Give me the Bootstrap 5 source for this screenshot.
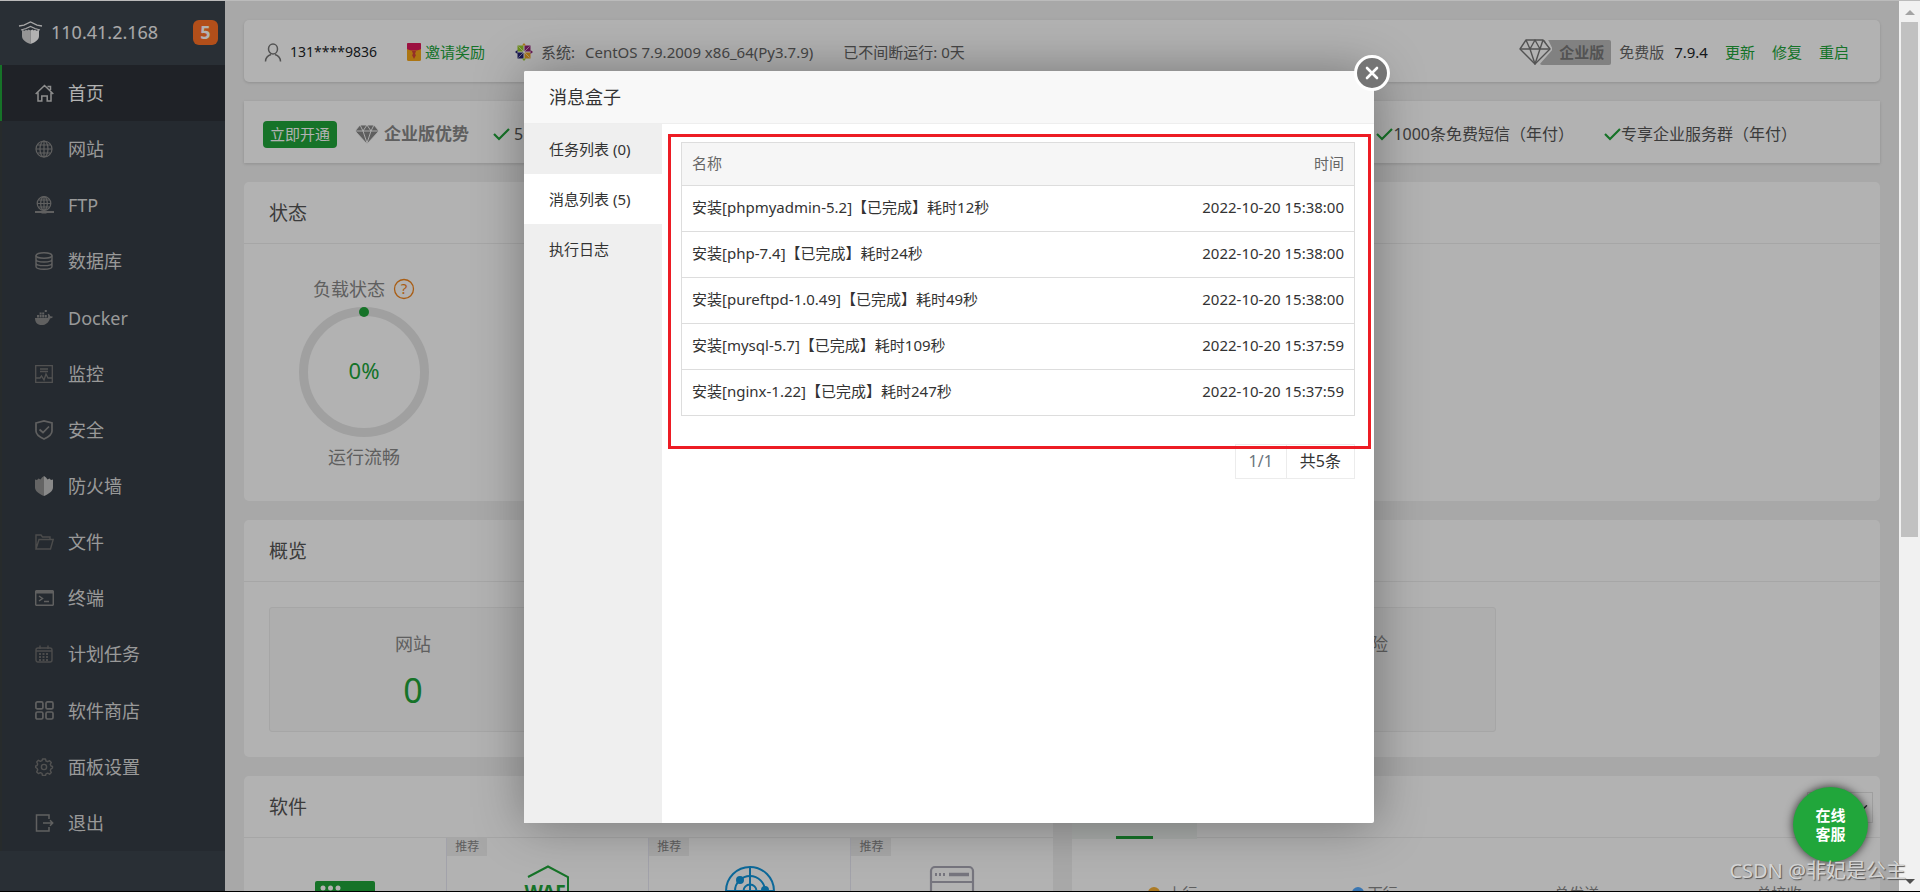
<!DOCTYPE html>
<html lang="zh-CN">
<head>
<meta charset="utf-8">
<meta name="viewport" content="width=device-width, initial-scale=1">
<title>服务器面板</title>
<link href="https://cdn.jsdelivr.net/npm/bootstrap@5.3.0/dist/css/bootstrap.min.css" rel="stylesheet">
<style>
  :root { --green: #20a53a; --gap: 19px; }
  body { font-family: "Noto Sans", "Noto Sans CJK SC", sans-serif; font-size: 15px; line-height: 20px; color: #555; background: #f1f1f1; }
  a { text-decoration: none; color: inherit; }
  svg { display: block; flex: none; }
  .app { border-top: 1px solid #bbb; border-bottom: 1px solid #000; }

  .side { width: 225px; background: #3c444d; padding-bottom: 40px; font-size: 18px; }
  .side-head { height: 64px; padding: 0 7px 2px 18px; color: #f2f2f2; }
  .count { width: 25px; height: 25px; line-height: 25px; border-radius: 6px; background: #ff7226; color: #fff; }
  .menu { background: #363d45; }
  .menu a { border-left: 2px solid #383e40; padding-left: 33px; gap: 14px; color: #dcdcdc; }
  .menu svg { color: #8a8a8a; }
  .menu .on a { background: #2d3238; border-color: var(--green); color: #fff; }
  .menu .on svg { color: #ccc; }

  .page { padding: var(--gap); gap: var(--gap); }
  .panel { background: #fff; border-radius: 5px; }
  .pair { gap: var(--gap); }
  .bar { min-height: 62px; box-shadow: 0 1px 3px rgba(0,0,0,.15); }
  .info { padding: 2px 31px 0 20px; color: #666; }
  .phone { font-size: 14px; }
  .sect { margin-left: 30px; }
  .near { margin-left: 10px; }
  .act { margin-left: 17px; }
  .green { color: var(--green); }
  .ent { height: 25px; margin-left: -12px; padding: 0 7px 0 19px; background: #b9b9b9; color: #777; border-radius: 2px; }
  .promo { border-radius: 0; padding: 4px 83px 0 19px; font-size: 16px; }
  .open-btn { background: var(--green); color: #fff; border: 0; border-radius: 4px; padding: 3px 7px; font-size: 15px; line-height: 21px; }
  .adv { font-size: 17px; color: #888; }
  .panel-head { height: 62px; padding: 0 25px; border-bottom: 1px solid #eee; font-size: 19px; color: #555; }
  .status-body { padding: 34px 0 34px 39px; font-size: 18px; color: #888; }
  .load { width: 162px; }
  .load-title { height: 22px; }
  .ring { width: 130px; height: 130px; margin: 7px 0 10px; }
  .ring span { font-size: 22px; line-height: 26px; padding-bottom: 4px; }
  .over { padding: 25px; gap: 25px; }
  .tile { width: 288px; padding: 26px 0 19px; border: 1px solid #eee; border-radius: 3px; background: #f9f9f9; font-size: 18px; color: #888; }
  .tile b { font-size: 34px; line-height: 44px; margin-top: 14px; font-weight: 400; }
  .soft { height: 140px; }
  .soft > div { border-left: 1px solid #e9e9f4; padding-top: 27px; }
  .soft > div:first-child { border-left: 0; }
  .soft .tag { background: #f0f0f0; color: #888; font-size: 12px; line-height: 18px; padding: 0 8px; }
  .tab { width: 125px; background: #f2f7f4; border: 0; height: 63px; }
  .tab::after { content: ""; display: block; width: 37px; height: 3px; margin: 60px auto 0; background: var(--green); }
  .pick { width: 66px; height: 31px; margin-right: 7px; border: 1px solid #e4e4e4; border-radius: 0; background-position: right 2px center; }
  .legend { padding-top: 45px; color: #888; }
  .dot { width: 12px; height: 12px; border-radius: 50%; }

  .shade { background: rgba(0,0,0,.3); padding: 2px 1px 0 0; }
  .box { width: 850px; height: 752px; background: #fff; border-radius: 2px; box-shadow: 1px 1px 50px rgba(0,0,0,.35); color: #333; }
  .box-head { height: 53px; padding: 0 25px; background: #f8f8f8; border-bottom: 1px solid #eee; font-size: 18px; border-radius: 2px 2px 0 0; }
  .box-x { width: 36px; height: 36px; right: -16px; top: -16px; border: 3px solid #fff; border-radius: 50%; background: #757575; color: #fff; }
  .box-nav { width: 138px; background: #efefef; }
  .box-nav button { height: 50px; border: 0; background: none; padding: 0 0 0 25px; text-align: left; color: #333; }
  .box-nav .on { background: #fff; }
  .box-main { padding: 18px 19px; }
  .msgs { border: 1px solid #ddd; }
  .msgs th { height: 43px; background: #f6f6f6; color: #666; font-weight: 400; }
  .msgs td { height: 46px; border-top: 1px solid #ddd; color: #333; }
  .msgs th, .msgs td { padding: 0 10px 2px; vertical-align: middle; }
  .msgs td { padding-bottom: 4px; }
  .pager { margin-top: 28px; border: 1px solid #ececec; font-size: 16px; }
  .pager span { padding: 0 13px; line-height: 33px; }
  .pager span + span { border-left: 1px solid #ececec; }
  .frame { inset: 10px 3px 374px 6px; border: 3px solid #ed1c24; pointer-events: none; }

  .help { width: 75px; height: 75px; right: 31px; bottom: 29px; border: 0; border-radius: 50%; background: #21a63b; color: #fff; box-shadow: 0 0 10px rgba(0,0,0,.75); line-height: 19px; }
  .credit { right: -7px; bottom: 7px; font-size: 20px; line-height: 26px; color: #d4d4d4; text-shadow: 1px 1px 1px #555; }
  .scroll { width: 21px; background: #f1f1f1; padding: 9px 2px 7px; }
  .thumb { background: #c1c1c1; height: 515px; }
  .tri { border: 5px solid transparent; }
  .tri-up { border-bottom-color: #a3a3a3; border-top: 0; margin-bottom: 7px; }
  .tri-down { border-top-color: #505050; border-bottom: 0; }
</style>
</head>
<body>
<div class="app d-flex vh-100 overflow-hidden">
  <div class="position-relative d-flex flex-grow-1">
    <nav class="side d-flex flex-column flex-shrink-0">
      <div class="side-head d-flex align-items-center">
        <svg width="25" height="25" viewBox="0 0 25 25" fill="none" stroke="#eee" stroke-width="1.3"><path d="M1 6l5-.8L12.500 2 19 5.200l5 .8M3 10l5-1.500 4.500-2 4.500 2L22 10"/><path fill="#d6d6d6" stroke="none" d="M4 10l3 .8.8-1.300 1.400 1 1.400-1 1.900 1V24C7 22 4 19.500 4 16z"/><path fill="#fff" stroke="none" d="M21 10l-3 .8-.8-1.300-1.400 1-1.400-1-1.900 1V24C18 22 21 19.500 21 16z"/></svg>
        <span class="ms-2">110.41.2.168</span>
        <span class="count ms-auto text-center fw-bold">5</span>
      </div>
      <ul class="menu list-unstyled mb-0 d-flex flex-column flex-fill">
        <li class="on d-flex flex-fill"><a href="#" class="d-flex flex-fill align-items-center"><svg width="19" height="18" viewBox="0 0 19 18" fill="none" stroke="currentColor" stroke-width="1.500"><path d="M.7 10L9.500 1.500 18.300 10M12.500 2.500h3v3.500M3 8.500V17h3.800v-5h5.400v5h3.800V8.500"/></svg>首页</a></li>
        <li class="d-flex flex-fill"><a href="#" class="d-flex flex-fill align-items-center"><svg width="19" height="18" viewBox="0 0 19 18" fill="none" stroke="currentColor" stroke-width="1.200"><circle cx="9" cy="9" r="8"/><ellipse cx="9" cy="9" rx="4" ry="8"/><path d="M9 1v16M1 9h16M2.500 5h13M2.500 13h13"/></svg>网站</a></li>
        <li class="d-flex flex-fill"><a href="#" class="d-flex flex-fill align-items-center"><svg width="19" height="18" viewBox="0 0 19 18" fill="none" stroke="currentColor" stroke-width="1.200"><circle cx="9" cy="7.500" r="6.800"/><ellipse cx="9" cy="7.500" rx="3.300" ry="6.800"/><path d="M9 1v13M2 7.500h14M3.500 4h11M3.500 11h11"/><path stroke-width="2" d="M0 16h19M6.500 16.500h5"/></svg>FTP</a></li>
        <li class="d-flex flex-fill"><a href="#" class="d-flex flex-fill align-items-center"><svg width="19" height="18" viewBox="0 0 19 18" fill="none" stroke="currentColor" stroke-width="1.400"><ellipse cx="9" cy="3.500" rx="8" ry="2.800"/><path d="M1 3.500v11C1 18.200 17 18.200 17 14.500v-11M1 7.200c0 3.700 16 3.700 16 0M1 10.900c0 3.700 16 3.700 16 0"/></svg>数据库</a></li>
        <li class="d-flex flex-fill"><a href="#" class="d-flex flex-fill align-items-center"><svg width="19" height="18" viewBox="0 0 19 18" fill="currentColor"><path d="M0 9h12.500c1-.8.8-2.500.2-3.300l.8-.9c1 .6 1.500 1.600 1.600 2.500 1-.2 2 0 2.900.5-.6 1.200-1.700 1.600-3 1.600C13.500 13.500 11 16 6.500 16 2.500 16 0 13.500 0 9zM2 6h2v2.400H2zM4.600 6h2v2.400h-2zM7.200 6h2v2.400h-2zM9.800 6h2v2.400h-2zM7.200 3.400h2v2h-2zM4.600 3.400h2v2h-2zM9.800 1h2v2h-2z"/></svg>Docker</a></li>
        <li class="d-flex flex-fill"><a href="#" class="d-flex flex-fill align-items-center"><svg width="19" height="18" viewBox="0 0 19 18" fill="none" stroke="#757575" stroke-width="1.300"><path d="M.7.7h16.600v16.600H.7zM5 4h8M5 6.500h8M1 13h4l1.500-2 2.500 4 2-6 2 4h4"/></svg>监控</a></li>
        <li class="d-flex flex-fill"><a href="#" class="d-flex flex-fill align-items-center"><svg width="19" height="20" viewBox="0 0 19 20" fill="none" stroke="currentColor" stroke-width="1.700"><path d="M1 3l8-2 8 2v8c0 3.500-3.500 6-8 8-4.500-2-8-4.500-8-8zM4.500 9.500l3.500 3 6-6"/></svg>安全</a></li>
        <li class="d-flex flex-fill"><a href="#" class="d-flex flex-fill align-items-center"><svg width="19" height="20" viewBox="0 0 19 20"><path fill="#909090" d="M0 3.500l2 .5 1.500-1.500 2 1L7 1.500 9 0v20c-5-2-9-5-9-8.500z"/><path fill="#c4c4c4" d="M18 3.500l-2 .5-1.500-1.500-2 1L11 1.500 9 0v20c5-2 9-5 9-8.500z"/></svg>防火墙</a></li>
        <li class="d-flex flex-fill"><a href="#" class="d-flex flex-fill align-items-center"><svg width="19" height="18" viewBox="0 0 19 18" fill="none" stroke="#6d6d6d" stroke-width="1.400"><path d="M1 16V2h5l1.500 2H15v2.500M1 16L4 6.500h14.200L15.500 16z"/></svg>文件</a></li>
        <li class="d-flex flex-fill"><a href="#" class="d-flex flex-fill align-items-center"><svg width="19" height="16" viewBox="0 0 19 16" fill="none" stroke="currentColor" stroke-width="1.500"><rect x=".7" y=".7" width="17.600" height="14.600" rx="1"/><path stroke-width="3" d="M1 2h17"/><path d="M4 6l3.500 2.500L4 11M9 11.500h5"/></svg>终端</a></li>
        <li class="d-flex flex-fill"><a href="#" class="d-flex flex-fill align-items-center"><svg width="19" height="18" viewBox="0 0 19 18" fill="none" stroke="#6d6d6d" stroke-width="1.400"><rect x="1" y="3" width="16" height="14" rx="2"/><path d="M1 6h16M5 .5V4M13 .5V4"/><path stroke-width="2" stroke-dasharray="2 1.500" d="M4 9h10.500M4 12h10.500M4 15h10.500"/></svg>计划任务</a></li>
        <li class="d-flex flex-fill"><a href="#" class="d-flex flex-fill align-items-center"><svg width="19" height="19" viewBox="0 0 19 19" fill="none" stroke="currentColor" stroke-width="1.700"><rect x=".9" y=".9" width="7" height="7" rx="1.500"/><rect x="11" y=".9" width="7" height="7" rx="1.500"/><rect x=".9" y="11" width="7" height="7" rx="1.500"/><rect x="11" y="11" width="7" height="7" rx="1.500"/></svg>软件商店</a></li>
        <li class="d-flex flex-fill"><a href="#" class="d-flex flex-fill align-items-center"><svg width="19" height="18" viewBox="0 0 19 18" fill="none" stroke="#757575" stroke-width="1.400" stroke-linejoin="round"><circle cx="9" cy="9" r="2.600"/><path d="M7.500 1h3l.5 2 1.600.7 2-1 1.700 1.700-1 2 .7 1.600 1.500.5v1.500l-1.500.9-.7 1.600 1 2-1.700 1.700-2-1-1.600.7-.5 1.600h-3L7 15.300l-1.600-.7-2 1-1.700-1.700 1-2L2 10.300l-1.300-.8V8l1.300-.4L2.700 6l-1-2 1.700-1.700 2 1L7 2.700z"/></svg>面板设置</a></li>
        <li class="d-flex flex-fill"><a href="#" class="d-flex flex-fill align-items-center"><svg width="19" height="18" viewBox="0 0 19 18" fill="none" stroke="currentColor" stroke-width="1.500"><path d="M14 5V1H1.500v16H14v-4M8 9h10M15 6.300L17.700 9 15 11.700"/></svg>退出</a></li>
      </ul>
    </nav>

    <main class="page d-flex flex-column flex-grow-1">
      <section class="panel bar info d-flex align-items-center">
        <svg width="18" height="19" viewBox="0 0 18 19" fill="none" stroke="#777" stroke-width="1.500"><ellipse cx="9" cy="6" rx="4.500" ry="5"/><path d="M1.500 18.500c0-4 2.500-6 5.500-7M16.500 18.500c0-4-2.500-6-5.500-7"/></svg>
        <span class="phone ms-2 text-dark">131****9836</span>
        <svg class="sect" width="14" height="18" viewBox="0 0 14 18"><rect width="14" height="18" rx="1.500" fill="#f7a81b"/><path fill="#e0185c" d="M1 0h12a1 1 0 0 1 1 1v5c-4 2-10 2-14 0V1a1 1 0 0 1 1-1z"/><path fill="#d6443a" d="M5 8h4l-1 3 1 1-2 4-2-4 1-1z"/></svg>
        <a href="#" class="green ms-1">邀请奖励</a>
        <svg class="sect" width="18" height="18" viewBox="0 0 18 18"><path fill="#9ccd2a" d="M2.500 2.500h6v6h-6z"/><path fill="#932279" d="M9.500 2.500h6v6h-6z"/><path fill="#262577" d="M2.500 9.500h6v6h-6z"/><path fill="#efa724" d="M9.500 9.500h6v6h-6zM9 0l2 2.500H7z"/><path fill="#9ccd2a" d="M9 18l2-2.500H7z"/><path fill="#262577" d="M0 9l2.500-2v4z"/><path fill="#932279" d="M18 9l-2.500-2v4z"/><path d="M3.500 3.500l11 11M14.500 3.500l-11 11" stroke="#fff" stroke-width=".6"/></svg>
        <span class="ms-2">系统:</span>
        <span class="near">CentOS 7.9.2009 x86_64(Py3.7.9)</span>
        <span class="sect">已不间断运行: 0天</span>
        <svg class="ms-auto position-relative" width="33" height="26" viewBox="0 0 33 26" fill="none" stroke="#777" stroke-width="1.400" stroke-linejoin="round"><path stroke="#fff" stroke-width="3" d="M27 0l5 10-14 16"/><path fill="#fff" d="M7 1h17l7 9-15 15L1 10z"/><path d="M1 10h30M7 1l4 9 5 15 5-15 3-9M11 10l5-9 5 9"/></svg>
        <span class="ent d-flex align-items-center fw-bold">企业版</span>
        <span class="ms-2">免费版</span>
        <span class="near text-dark">7.9.4</span>
        <a href="#" class="green act">更新</a>
        <a href="#" class="green act">修复</a>
        <a href="#" class="green act">重启</a>
      </section>

      <section class="panel bar promo d-flex align-items-center">
        <button type="button" class="open-btn">立即开通</button>
        <svg class="act" width="26" height="20" viewBox="0 0 26 20" fill="#888" stroke="#fff" stroke-width=".9"><path d="M6 1h14l5 6-12 13L1 7z"/><path fill="none" d="M1 7h24M6 1l3 6 4 12 4-12 3-6M9 7l4-6 4 6"/></svg>
        <span class="adv fw-bold ms-1">企业版优势</span>
        <span class="d-flex align-items-center ms-4"><svg width="17" height="13" viewBox="0 0 17 13" fill="none" stroke="#20a53a" stroke-width="2.200"><path d="M1 6l5 5L16 1"/></svg><span class="ms-1">5分钟</span></span>
        <span class="d-flex align-items-center ms-auto"><svg width="17" height="13" viewBox="0 0 17 13" fill="none" stroke="#20a53a" stroke-width="2.200"><path d="M1 6l5 5L16 1"/></svg><span>1000条免费短信（年付）</span></span>
        <span class="d-flex align-items-center sect"><svg width="17" height="13" viewBox="0 0 17 13" fill="none" stroke="#20a53a" stroke-width="2.200"><path d="M1 6l5 5L16 1"/></svg><span>专享企业服务群（年付）</span></span>
      </section>

      <section class="panel">
        <div class="panel-head d-flex align-items-center">状态</div>
        <div class="status-body">
          <div class="load d-flex flex-column align-items-center">
            <div class="load-title d-flex align-items-center gap-2">负载状态
              <svg width="22" height="22" viewBox="0 0 22 22"><circle cx="11" cy="11" r="9.500" fill="none" stroke="#f2861d" stroke-width="1.300"/><text x="11" y="16" text-anchor="middle" font-size="15" fill="#f2861d">?</text></svg>
            </div>
            <div class="ring position-relative d-flex align-items-center justify-content-center">
              <svg class="position-absolute top-0 start-0" width="130" height="130" viewBox="0 0 130 130"><circle cx="65" cy="65" r="60.500" fill="none" stroke="#e6e6e6" stroke-width="9"/><circle cx="65" cy="5" r="5" fill="#20a53a"/></svg>
              <span class="green">0%</span>
            </div>
            <div>运行流畅</div>
          </div>
        </div>
      </section>

      <section class="panel">
        <div class="panel-head d-flex align-items-center">概览</div>
        <div class="over d-flex">
          <div class="tile d-flex flex-column align-items-center">网站<b class="green">0</b></div>
          <div class="tile"></div>
          <div class="tile"></div>
          <div class="tile d-flex flex-column align-items-center">安全风险</div>
        </div>
      </section>

      <div class="pair d-flex">
        <section class="panel w-50">
          <div class="panel-head d-flex align-items-center">软件</div>
          <div class="soft d-flex">
            <div class="w-25 d-flex justify-content-center"><svg class="mt-3" width="60" height="60" viewBox="0 0 60 60"><rect width="60" height="60" rx="2" fill="#20a53a"/><circle cx="8" cy="7" r="2.500" fill="#fff"/><circle cx="15.500" cy="7" r="2.500" fill="#fff"/><circle cx="23" cy="7" r="2.500" fill="#fff"/></svg></div>
            <div class="w-25 position-relative d-flex justify-content-center"><span class="tag position-absolute top-0 start-0">推荐</span><svg width="50" height="60" viewBox="0 0 50 60"><path d="M5 12l20-10.500L45 12v34L25 58" fill="none" stroke="#20a53a" stroke-width="2"/><text x="22" y="34" text-anchor="middle" font-size="19" font-weight="700" fill="#20a53a">WAF</text></svg></div>
            <div class="w-25 position-relative d-flex justify-content-center"><span class="tag position-absolute top-0 start-0">推荐</span><svg width="50" height="60" viewBox="0 0 50 60" fill="none" stroke="#1296db" stroke-width="2"><circle cx="25" cy="26" r="24"/><circle cx="25" cy="26" r="15"/><circle cx="25" cy="26" r="6.500"/><path d="M25 2v48M1 26h48M25 26l14 14"/><circle cx="15" cy="15" r="3" fill="#1296db"/><circle cx="40" cy="25" r="3" fill="#1296db"/></svg></div>
            <div class="w-25 position-relative d-flex justify-content-center"><span class="tag position-absolute top-0 start-0">推荐</span><svg width="46" height="60" viewBox="0 0 46 60" fill="none" stroke="#a9a8b5" stroke-width="2.200"><rect x="2" y="2" width="42" height="56" rx="4"/><path d="M2 17h42"/><path stroke-width="3" stroke-dasharray="2 2" d="M6 9.500h12"/><path stroke-width="3.500" d="M20 9.500h20"/></svg></div>
          </div>
        </section>
        <section class="panel w-50">
          <div class="panel-head d-flex align-items-start p-0">
            <button type="button" class="tab p-0" aria-label="流量"></button>
            <select class="pick ms-auto mt-3 form-select" aria-label="网卡"><option></option></select>
          </div>
          <div class="legend d-flex">
            <div class="w-25 d-flex justify-content-center align-items-center gap-2"><i class="dot" style="background:#f7b035"></i>上行</div>
            <div class="w-25 d-flex justify-content-center align-items-center gap-1"><i class="dot" style="background:#52a9ff"></i>下行</div>
            <div class="w-25 text-center">总发送</div>
            <div class="w-25 text-center">总接收</div>
          </div>
        </section>
      </div>
    </main>

    <div class="shade position-absolute top-0 start-0 w-100 h-100 d-flex align-items-center justify-content-center">
      <div class="box position-relative d-flex flex-column" role="dialog" aria-label="消息盒子">
        <div class="box-head d-flex align-items-center">消息盒子</div>
        <button type="button" class="box-x position-absolute p-0 d-flex align-items-center justify-content-center" aria-label="关闭"><svg width="14" height="14" viewBox="0 0 14 14" stroke="#fff" stroke-width="2.600" stroke-linecap="round"><path d="M2 2l10 10M12 2L2 12"/></svg></button>
        <div class="d-flex flex-fill">
          <div class="box-nav d-flex flex-column">
            <button type="button">任务列表 (0)</button>
            <button type="button" class="on">消息列表 (5)</button>
            <button type="button">执行日志</button>
          </div>
          <div class="box-main position-relative flex-fill d-flex flex-column">
            <table class="msgs w-100">
              <thead><tr><th>名称</th><th class="text-end">时间</th></tr></thead>
              <tbody>
                <tr><td>安装[phpmyadmin-5.2]【已完成】耗时12秒</td><td class="text-end">2022-10-20 15:38:00</td></tr>
                <tr><td>安装[php-7.4]【已完成】耗时24秒</td><td class="text-end">2022-10-20 15:38:00</td></tr>
                <tr><td>安装[pureftpd-1.0.49]【已完成】耗时49秒</td><td class="text-end">2022-10-20 15:38:00</td></tr>
                <tr><td>安装[mysql-5.7]【已完成】耗时109秒</td><td class="text-end">2022-10-20 15:37:59</td></tr>
                <tr><td>安装[nginx-1.22]【已完成】耗时247秒</td><td class="text-end">2022-10-20 15:37:59</td></tr>
              </tbody>
            </table>
            <div class="pager d-flex align-self-end"><span class="text-secondary">1/1</span><span>共5条</span></div>
            <div class="frame position-absolute"></div>
          </div>
        </div>
      </div>
    </div>
    <button type="button" class="help position-absolute fw-bold">在线<br>客服</button>
    <div class="credit position-absolute text-nowrap">CSDN @非妃是公主</div>
  </div>
  <div class="scroll d-flex flex-column align-items-center flex-shrink-0">
    <div class="tri tri-up"></div>
    <div class="thumb w-100"></div>
    <div class="tri tri-down mt-auto"></div>
  </div>
</div>
<script src="https://cdn.jsdelivr.net/npm/bootstrap@5.3.0/dist/js/bootstrap.bundle.min.js"></script>
</body>
</html>
